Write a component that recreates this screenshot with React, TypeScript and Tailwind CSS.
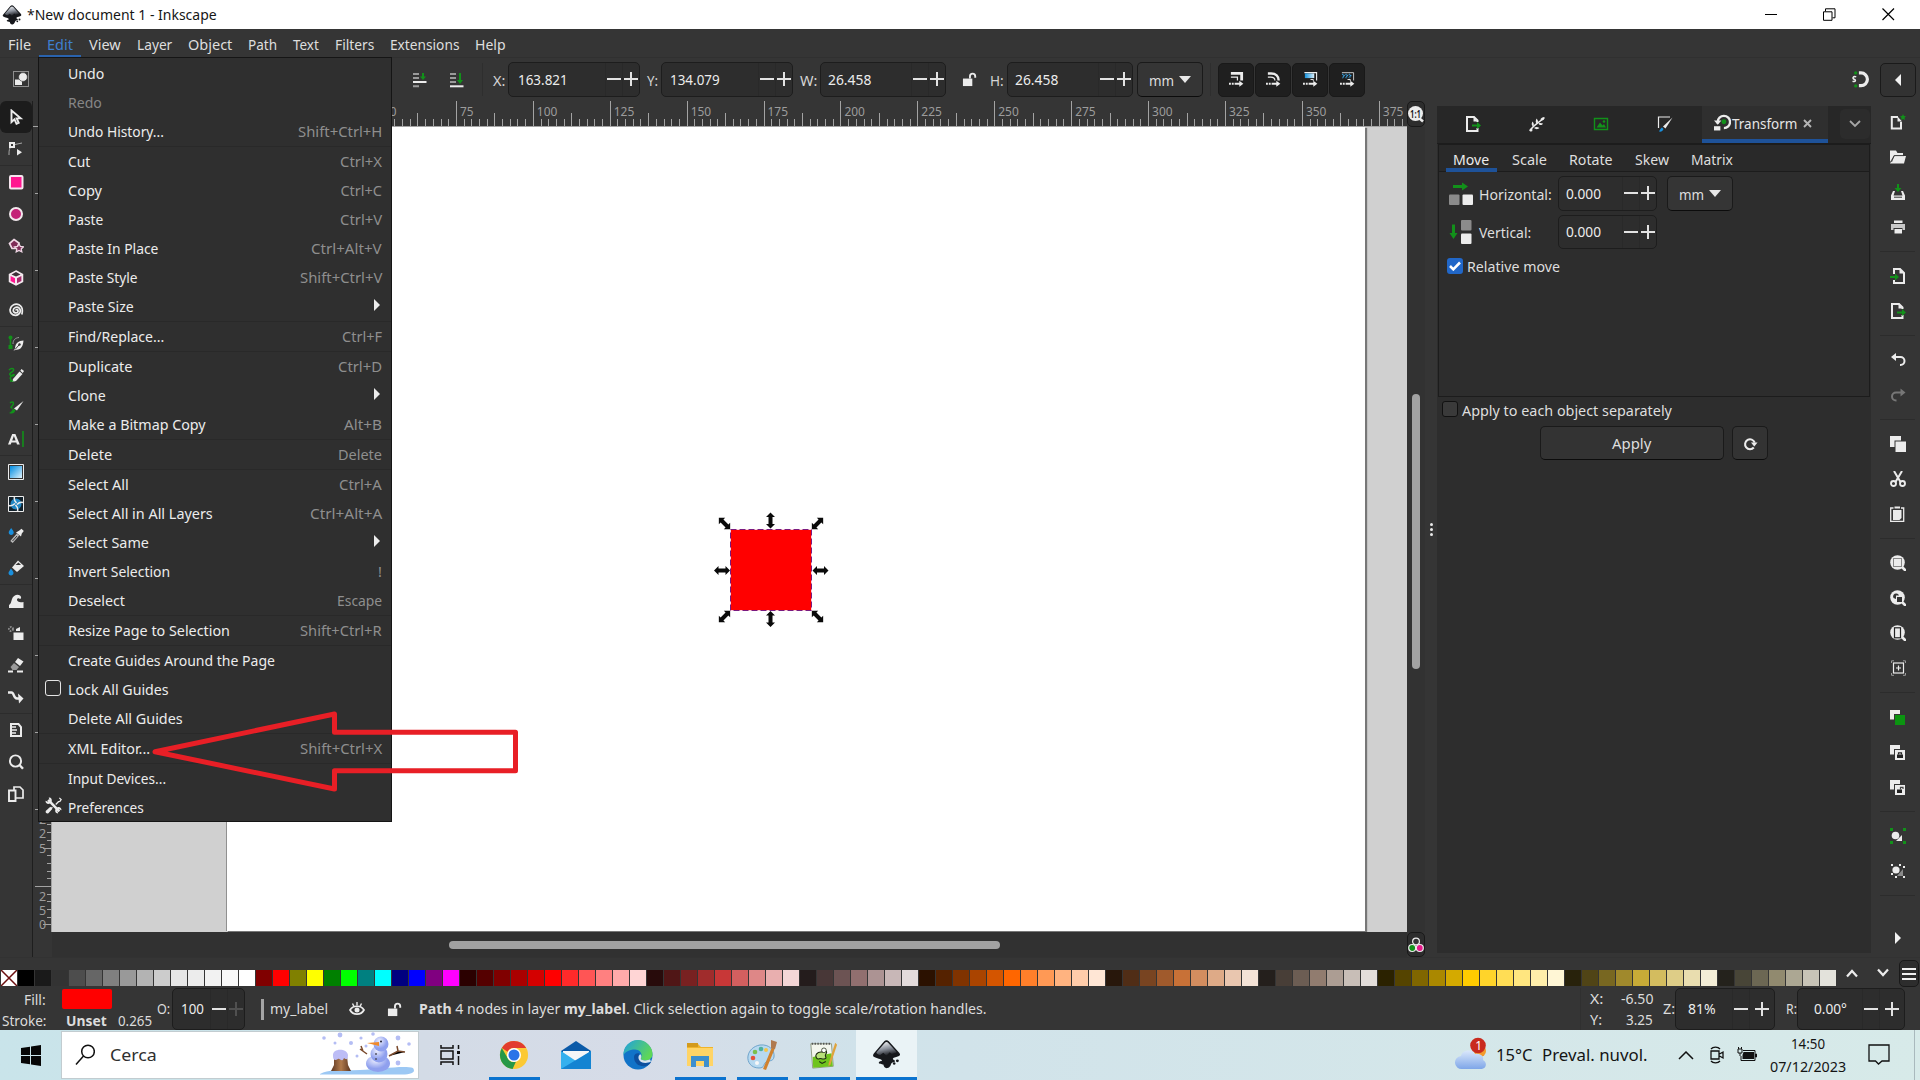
import React, { useLayoutEffect, useRef, useState } from "react";

/* Single-line label squeezed or stretched to a known width. */
function Fit({ w, children, right = false, className = "" }: { w: number; children: React.ReactNode; right?: boolean; className?: string }) {
  const ref = useRef<HTMLSpanElement>(null);
  const [scale, setScale] = useState(1);
  useLayoutEffect(() => {
    if (ref.current) setScale(w / ref.current.offsetWidth);
  }, [w]);
  return (
    <span className={"flex shrink-0 " + (right ? "justify-end " : "") + className} style={{ width: w }}>
      <span ref={ref} className={"inline-block shrink-0 whitespace-nowrap " + (right ? "origin-right" : "origin-left")} style={{ transform: `translateY(-1px) scaleX(${scale})` }}>
        {children}
      </span>
    </span>
  );
}

function Ico({ s = 16, children, className = "" }: { s?: number; children: React.ReactNode; className?: string }) {
  return (
    <svg width={s} height={s} viewBox="0 0 16 16" className={"shrink-0 " + className} fill="none">
      {children}
    </svg>
  );
}

const W = "#ececec";
const G = "#12911a";

/* ---------- menus ---------- */

const menus: [string, number][] = [
  ["File", 23], ["Edit", 26], ["View", 32], ["Layer", 35], ["Object", 44],
  ["Path", 29], ["Text", 26], ["Filters", 39], ["Extensions", 69], ["Help", 31],
];

type Item = { t: string; w: number; k?: string; kw?: number; sub?: boolean; off?: boolean; box?: boolean; tools?: boolean };
const editMenu: Item[][] = [
  [{ t: "Undo", w: 36 }, { t: "Redo", w: 34, off: true }, { t: "Undo History...", w: 96, k: "Shift+Ctrl+H", kw: 84 }],
  [
    { t: "Cut", w: 22, k: "Ctrl+X", kw: 42 }, { t: "Copy", w: 34, k: "Ctrl+C", kw: 42 }, { t: "Paste", w: 35, k: "Ctrl+V", kw: 42 },
    { t: "Paste In Place", w: 90, k: "Ctrl+Alt+V", kw: 71 }, { t: "Paste Style", w: 70, k: "Shift+Ctrl+V", kw: 82 }, { t: "Paste Size", w: 66, sub: true },
  ],
  [{ t: "Find/Replace...", w: 96, k: "Ctrl+F", kw: 40 }],
  [{ t: "Duplicate", w: 64, k: "Ctrl+D", kw: 44 }, { t: "Clone", w: 38, sub: true }, { t: "Make a Bitmap Copy", w: 138, k: "Alt+B", kw: 38 }],
  [{ t: "Delete", w: 44, k: "Delete", kw: 44 }],
  [
    { t: "Select All", w: 61, k: "Ctrl+A", kw: 43 }, { t: "Select All in All Layers", w: 145, k: "Ctrl+Alt+A", kw: 72 }, { t: "Select Same", w: 81, sub: true },
    { t: "Invert Selection", w: 102, k: "!", kw: 4 }, { t: "Deselect", w: 57, k: "Escape", kw: 45 },
  ],
  [{ t: "Resize Page to Selection", w: 162, k: "Shift+Ctrl+R", kw: 82 }],
  [{ t: "Create Guides Around the Page", w: 207 }, { t: "Lock All Guides", w: 101, box: true }, { t: "Delete All Guides", w: 115 }],
  [{ t: "XML Editor...", w: 82, k: "Shift+Ctrl+X", kw: 82 }],
  [{ t: "Input Devices...", w: 98 }, { t: "Preferences", w: 76, tools: true }],
];

function EditMenu() {
  return (
    <div className="absolute left-[38px] top-[57px] flex h-[765px] w-[354px] flex-col border border-[#151515] bg-[#2f2f2f] pt-px">
      {editMenu.map((group, gi) => (
        <div key={gi} className={gi ? "border-t border-[#292929]" : ""}>
          {group.map((it) => (
            <div key={it.t} className={"flex h-[29px] items-center pr-[9px] " + (it.off ? "text-[#868686]" : "text-[#ececec]")}>
              <div className="flex w-[29px] shrink-0 items-center pl-[6px]">
                {it.box && <span className="-mt-[3px] h-4 w-4 rounded-[3px] border border-[#e4e4e4]" />}
                {it.tools && (
                  <Ico s={17} className="-mt-[4px]">
                    <path d="M3 2.8l10.500 10.700" stroke={W} strokeWidth="2.400" />
                    <path d="M.5 3.500l2.500 1L4.500 3 3.500.6C5.500.2 7 2 6.300 4.200L4.200 6.400C2.200 7 .2 5.500.5 3.500zM15.500 12.500l-2.500-1-1.500 1.500 1 2.400c-2 .4-3.500-1.400-2.800-3.600l2.100-2.200c2-.6 4 .9 3.700 2.900z" fill={W} />
                    <path d="M13.500.8l1.700 1.700-1.200 1.600-1.300.3-2.600 2.600M7 9.500L3.500 13" stroke={W} strokeWidth="1.200" />
                    <path d="M5 9.200L7 11l-3.800 4.200c-1.600.9-3.300-.9-2.300-2.300z" fill={W} />
                  </Ico>
                )}
              </div>
              <Fit w={it.w}>{it.t}</Fit>
              <span className="grow" />
              {it.k && <Fit w={it.kw!} right className="text-[#8e8e8e]">{it.k}</Fit>}
              {it.sub && <span className="mr-[2px] h-0 w-0 -translate-y-[2px] border-y-[6px] border-l-[6px] border-y-transparent border-l-[#ececec]" />}
            </div>
          ))}
        </div>
      ))}
    </div>
  );
}

/* ---------- inputs ---------- */

function Spin({ value, vw, box, wide = false, dim = false, pad = "pl-[9px]" }: { value: string; vw: number; box: string; wide?: boolean; dim?: boolean; pad?: string }) {
  return (
    <div className={"flex shrink-0 items-center rounded-[5px] border border-[#1d1d1d] bg-[#2d2d2d] text-[#ececec] " + pad + " " + box}>
      <Fit w={vw}>{value}</Fit>
      <span className="grow" />
      <div className={"flex items-center justify-center self-stretch border-l border-[#292929] " + (wide ? "w-[17px]" : "w-[17px]")}>
        <span className="-mt-px h-[2px] w-[14px] bg-[#e2e2e2]" />
      </div>
      <div className={"flex items-center justify-center self-stretch border-l border-[#292929] " + (wide ? "w-[25px]" : "w-[17px]")}>
        <svg width="14" height="14" viewBox="0 0 14 14" className="-mt-px shrink-0">
          <path d="M0 7h14M7 0v14" stroke={dim ? "#505050" : "#e2e2e2"} strokeWidth="2" />
        </svg>
      </div>
    </div>
  );
}

function UnitButton() {
  return (
    <div className="flex h-[35px] w-[66px] shrink-0 items-center rounded-[5px] border border-[#1a1a1a] border-b-[#0c0c0c] bg-[#353535] pl-[11px] text-[#dedede]">
      <Fit w={25} className="mt-[2px]">mm</Fit>
      <span className="ml-[5px] h-0 w-0 border-x-[6px] border-t-[7px] border-x-transparent border-t-[#e8e8e8]" />
    </div>
  );
}

function LockIcon({ className = "" }: { className?: string }) {
  return (
    <Ico s={15} className={className}>
      <path d="M1 7h10v8H1z" fill={W} />
      <path d="M8.500 7V4.500a2.800 2.800 0 015.600 0V6" stroke={W} strokeWidth="2" />
    </Ico>
  );
}

const dots = <path d="M0 12.500h2M3 12.500h2M6 12.500h2M8 12.500h4" stroke={W} strokeWidth="2" />;
const arrowTip = <path d="M11 9.300l4.300 3.200L11 15.700z" fill={W} />;
const affect = [
  <g key="a"><path d="M2 1.500h11.500V9" stroke={W} strokeWidth="3" /><path d="M2 5.500h7V9" stroke={W} strokeWidth="1.300" />{dots}{arrowTip}</g>,
  <g key="b"><path d="M2 1.500h3.500c5 0 8 3 8 7.500" stroke={W} strokeWidth="2.600" /><path d="M2 5.500h3c3 0 4.500 1.500 4.500 3.500" stroke={W} strokeWidth="1.300" />{dots}{arrowTip}</g>,
  <g key="c"><defs><linearGradient id="ga"><stop stopColor="#1592dd" /><stop offset="1" stopColor="#d8eefa" /></linearGradient></defs><path d="M1.500.7h13V9" stroke={W} strokeWidth="1.200" /><path d="M2 1.500h10v5H2z" fill="url(#ga)" /><path d="M8 8h3v1.500" stroke={W} />{dots}{arrowTip}</g>,
  <g key="d"><path d="M2 .7h12.500V9" stroke="#cfcfcf" strokeWidth="1" /><path d="M2.500 2l2 2-2 2.500M6 2l2 2-2 2.500M9.500 2l2 2-2 2.500" stroke="#3aa3e2" strokeWidth="1.500" strokeDasharray="1.200 .6" /><path d="M8 8h3v1.500" stroke={W} />{dots}{arrowTip}</g>,
];

function Toolbar() {
  return (
    <div className="flex h-[44px] shrink-0 items-start border-t border-[#303030] bg-[#353535] pt-[4px] text-[#d6d6d6]">
      <div className="flex h-[35px] w-full items-center">
        <Ico className="-mt-[2px] ml-[13px]">
          <rect x=".5" y=".5" width="15" height="15" stroke="#e8e8e8" strokeDasharray="1 1" />
          <path d="M2 8.500h7v5.500H2z" fill={W} /><circle cx="10" cy="6" r="4.400" fill={W} stroke="#353535" strokeWidth=".6" />
        </Ico>
        <Ico className="ml-[383px]">
          <path d="M1 2h6M1 6h6M1 14.300h6" stroke="#9a9a9a" strokeWidth="2" /><path d="M1 10h13.500" stroke={W} strokeWidth="2" />
          <path d="M11 1v4" stroke={G} strokeWidth="2" /><path d="M8 4.500h6L11 8z" fill={G} />
        </Ico>
        <Ico className="ml-[21px]">
          <path d="M1 2h6M1 6h6M1 10h6" stroke="#9a9a9a" strokeWidth="2" /><path d="M1 14.300h13.500" stroke={W} strokeWidth="2" />
          <path d="M11 1v8" stroke={G} strokeWidth="2" /><path d="M8 8h6l-3 4z" fill={G} />
        </Ico>
        <span className="ml-[17px] h-[33px] w-px bg-[#2e2e2e]" />
        <Fit w={12} className="ml-[10px] mt-[2px]">X:</Fit>
        <Spin value="163.821" vw={50} box="ml-[3px] h-[35px] w-[132px]" />
        <Fit w={11} className="ml-[7px] mt-[2px]">Y:</Fit>
        <Spin value="134.079" vw={50} box="ml-[3px] h-[35px] w-[132px]" pad="pl-[8px]" />
        <Fit w={17} className="ml-[7px] mt-[2px]">W:</Fit>
        <Spin value="26.458" vw={43} box="ml-[3px] h-[35px] w-[126px]" pad="pl-[7px]" />
        <LockIcon className="ml-[16px]" />
        <Fit w={14} className="ml-[13px] mt-[2px]">H:</Fit>
        <Spin value="26.458" vw={43} box="ml-[3px] h-[35px] w-[126px]" pad="pl-[7px]" />
        <div className="ml-[4px]"><UnitButton /></div>
        <span className="ml-[7px] h-[33px] w-px bg-[#2e2e2e]" />
        <div className="ml-[7px] flex gap-px">
          {affect.map((a, i) => (
            <div key={i} className="flex h-[34px] w-[36px] items-center justify-center rounded-[5px] border border-[#191919] bg-[#1f1f1f]">
              <Ico s={15}>{a}</Ico>
            </div>
          ))}
        </div>
        <span className="grow" />
        <Ico s={17}>
          <path d="M6.500 1.800h2a6 6 0 010 12h-2" stroke={W} strokeWidth="3" />
          <circle cx="3.500" cy="1.800" r="1.600" fill={G} /><circle cx="3.500" cy="14" r="1.600" fill={G} />
          <path d="M4 5.500c-3-1-4 1.500-2 2.200s1.500 3-1.500 2" stroke={W} strokeWidth="1.400" />
        </Ico>
        <div className="ml-[11px] mr-[4px] flex h-[34px] w-[36px] items-center justify-center rounded-[5px] border border-[#1a1a1a] bg-[#323232]">
          <span className="h-0 w-0 border-y-[6px] border-r-[6px] border-y-transparent border-r-[#f2f2f2]" />
        </div>
      </div>
    </div>
  );
}

/* ---------- left tool box ---------- */

const P = "#e6198a";
const tools: React.ReactNode[][] = [
  [
    <path d="M3.500 1.500v11.500l3-2.700 2 4.500 2.200-1-2-4.400h4z" stroke={W} strokeWidth="1.900" />,
    <g><path d="M2 2h4v4H2z" stroke={W} strokeWidth="2" /><path d="M7 3.500L14 2M2 7c-1 2-1 4-1 7" stroke="#a8a8a8" /><path d="M9 8v6.500l5-3.200z" fill={W} /></g>,
  ],
  [
    <rect x="2" y="2" width="12.500" height="12.500" rx="1" fill="#ff1690" stroke="#f6e6ef" strokeWidth="2" />,
    <circle cx="8" cy="8" r="6" fill="#c42278" stroke="#f2e8ed" strokeWidth="2" />,
    <g><path d="M6 1.500l5 3.500-2 5.500H4L1.500 5.500z" fill="#7f2b58" stroke="#f0d8e6" strokeWidth="1.700" /><path d="M11 5.800l1.400 2.700 3 .4-2.200 2 .6 3-2.800-1.400-2.800 1.400.6-3-2.200-2 3-.4z" fill="#7f2b58" stroke="#f0d8e6" strokeWidth="1.300" /></g>,
    <g><path d="M8 1l6.500 3.500v7L8 15l-6.500-3.500v-7z" fill="#f4e9ef" stroke="#f4e9ef" strokeWidth="1.500" /><path d="M8 2l4.500 2.400L8 6.500 3.500 4.400z" fill="#3d3038" /><path d="M2.600 6L7 8.200v5L2.600 11z" fill="#ff1690" /><path d="M13.400 6L9 8.200v5l4.400-2.200z" fill="#a72a6c" /></g>,
    <path d="M8 8.500c0-1.500 2.200-1 2 .8-.3 2.200-4.400 2.200-4.700-.6C5 5.500 9 4 11.200 6.200c2.400 2.600.6 7-3.600 7.200C3.800 13.500 1.500 10 2.200 7 3 3 7.500 1 11 2.800c3 1.600 4 5.200 2.800 9.700" stroke={W} strokeWidth="1.700" />,
  ],
  [
    <g><path d="M2.500 4v8" stroke={G} strokeWidth="1.600" /><circle cx="2.500" cy="2.500" r="2" fill={G} /><path d="M.5 10h4v4h-4z" fill={G} /><path d="M5 9c0-4 2-6 6-6.500" stroke="#9a9a9a" /><path d="M15.500 5.500c-5 .5-8 2-8.500 8l-1.500 2 3-.8c5 0 6.500-4 7-9.200z" fill={W} /><path d="M7 14.500l4-4.500" stroke="#353535" /><circle cx="11.500" cy="9.500" r="1.200" fill="#353535" /></g>,
    <g><path d="M1 3c3-3 6-1 4 1S0 7 3 8.500s4-1.500 2.500-1S1 11 3 12.500" stroke={G} strokeWidth="1.500" /><path d="M5 12l6.500-7.500 3 2.500L8 14l-4 1z" fill={W} /><path d="M12.300 3.800L13.500 2l2.500 2-1.300 2z" fill={W} /><path d="M2.500 11.500l3.500 3-4 .5z" fill={G} /></g>,
    <g><path d="M2 4c4-3 4 1 2.500 2.500S2 9 4.500 9" stroke={G} strokeWidth="1.500" /><path d="M1 14c4 1.500 6-.5 6.500-3L5 9.500C4 12 3 13 1 14z" fill={G} /><path d="M6 9.500L15.500 2 9 11.500z" fill={W} /></g>,
    <g><path d="M0 13.500L4.200 3h3.200l4.400 10.500H9l-.7-2H3.500l-.8 2zM4.200 9.400h3.400L5.900 5z" fill={W} /><path d="M15 0v16" stroke={G} strokeWidth="1.600" /></g>,
  ],
  [
    <g><defs><linearGradient id="gb" x2="1" y2="1"><stop offset=".1" stopColor="#1395e4" /><stop offset="1" stopColor="#dff2fc" /></linearGradient></defs><path d="M.5.5h15v15H.5z" fill="#353535" stroke={W} /><path d="M2 2h12v12H2z" fill="url(#gb)" /></g>,
    <g><path d="M.5.5h15v15H.5z" fill="#12212b" stroke={W} /><circle cx="8" cy="8" r="5.500" fill="#2187c4" /><path d="M6.500 1c-1 3 .5 4.500 2 6M15 6.500c-3-1-4.500.5-6 2M9.500 15c1-3-.5-4.500-2-6M1 9.500c3 1 4.500-.5 6-2" stroke={W} strokeWidth="1.500" /></g>,
    <g><path d="M3.200 0c1.500 2.300 2.500 3 2.500 4.500S4.500 7 3.200 7 .7 6 .7 4.500 2 2 3.200 0z" fill="#1a8fdc" /><path d="M3.500 14l6.500-7.500" stroke="#b9b9b9" strokeWidth="3.200" /><path d="M4.500 13l4.500-5" stroke="#353535" /><path d="M8 4.500l5 4 .8-3L15.800 3 13.500.7l-2.500 2z" fill={W} /></g>,
    <g><path d="M10 .5l6 5.500-7 6-5-4.500z" fill={W} /><path d="M7.500 5l3-2.500L13 5z" fill="#353535" /><path d="M3 8.500c1.500 2.300 2.500 3 2.500 4.500S4.300 15.500 3 15.500.5 14.500.5 13 2 10.500 3 8.500z" fill="#1a8fdc" /></g>,
  ],
  [
    <path d="M1 15v-3c2-1 2-3 3-6 1-3 5-5.500 8-3.500 1.500 1 1.500 3 0 3.500-1-1.200-3-1-3 .8 0 2.200 3 3 6.500 2.200v6z" fill={W} />,
    <g><circle cx="3" cy="4" r="2" stroke="#8a8a8a" strokeDasharray="1.500 1" strokeWidth="2" /><path d="M8 4l4-2v4H8z" fill={W} /><path d="M5.500 7.500h10V15h-10z" fill={W} /></g>,
    <g><path d="M10 1l5.500 3.500L12 9 7 5z" fill={W} /><path d="M6 6l5 4-2.500 3h-4L2.500 10z" fill="#9a9a9a" /><path d="M0 14.500h5M9 14.500h6" stroke={W} strokeWidth="2" /></g>,
    <g><path d="M0 3.500h3.500C6.500 3.500 5 9.500 9 9.500h2" stroke={W} strokeWidth="2.400" /><path d="M10 4.500l5.500 5-4.500 5z" fill={W} /></g>,
  ],
  [
    <g><path d="M3 2h7.500l2.500 3v9H3z" stroke={W} strokeWidth="2" /><path d="M4 5h4M4 8h5M4 11h4" stroke={W} strokeWidth="1.300" /></g>,
    <g><circle cx="7.500" cy="7" r="5.600" stroke={W} strokeWidth="1.900" /><path d="M11.500 11l3.500 3.800" stroke={W} strokeWidth="2.400" /></g>,
    <g><path d="M6 1h6l3 3v8H6z" stroke={W} strokeWidth="1.700" /><path d="M1 4.500h6.500V15H1z" fill="#353535" stroke={W} strokeWidth="1.900" /></g>,
  ],
];

function ToolBox() {
  return (
    <div className="flex w-[33px] shrink-0 flex-col border-r border-[#1e1e1e] bg-[#353535]">
      {tools.map((g, gi) => (
        <div key={gi} className={gi ? "border-t border-[#2c2c2c]" : ""}>
          {g.map((t, i) => (
            <div key={i} className={"flex h-8 w-8 items-center justify-center " + (gi + i === 0 ? "rounded-[6px] bg-[#1c1c1c]" : "")}>
              <Ico>{t}</Ico>
            </div>
          ))}
        </div>
      ))}
    </div>
  );
}

/* ---------- canvas with rulers ---------- */

const RX = 456.400 - 33;
const STEP = 76.910;

function HRuler() {
  const ticks: React.ReactNode[] = [];
  for (let i = -20; i <= 126; i++) {
    const px = Math.floor(RX + (i * STEP) / 10) + 0.5;
    const n = ((i % 10) + 10) % 10;
    if (px > 1374) break;
    ticks.push(<path key={i} d={`M${px} ${n === 0 ? 0 : n === 5 ? 12 : 18}V25`} stroke="#a3a3a3" />);
  }
  const labels = Array.from({ length: 14 }, (_, k) => 50 + 25 * k);
  return (
    <svg width="1374" height="26" className="shrink-0 bg-[#353535]">
      {ticks}
      {labels.map((v) => (
        <text key={v} x={RX + ((v - 75) / 25) * STEP + 3.500} y="14.500" textLength={v < 100 ? 13.500 : 20.500} lengthAdjust="spacingAndGlyphs" fill="#9c9c9c" className="text-[12.500px]">{v}</text>
      ))}
      <path d="M0 25.500h1374" stroke="#a3a3a3" />
    </svg>
  );
}

function VRuler() {
  const ticks: React.ReactNode[] = [];
  for (let i = -98; i <= 5; i++) {
    const y = Math.round(886 + i * 7.698 - 127) + 0.5;
    const n = ((i % 10) + 10) % 10;
    if (y < 0) continue;
    ticks.push(<path key={i} d={`M${n === 0 ? 2 : n === 5 ? 10 : 14} ${y}H19`} stroke="#a3a3a3" />);
  }
  return (
    <svg width="19" height="805" className="shrink-0 overflow-visible bg-[#353535]">
      {ticks}
      {[["2", 697], ["2", 711], ["5", 725.500], ["2", 773.500], ["5", 788], ["0", 802]].map(([c, y], i) => (
        <text key={i} x="6" y={y} fill="#9c9c9c" className="text-[12.500px]">{c}</text>
      ))}
      <path d="M18.500 0v805" stroke="#a3a3a3" />
    </svg>
  );
}

function Selection() {
  const dbl = "M0-8L4.500-3.500H2V3.500H4.500L0 8-4.500 3.500H-2V-3.500H-4.500Z";
  const h: [number, number, number][] = [
    [80.500, 30.500, 0], [80.500, 129, 0], [32, 80.500, 90], [130.500, 80.500, 90],
    [34.500, 33.500, -45], [127.500, 33.500, 45], [34.500, 126.500, 45], [127.500, 126.500, -45],
  ];
  return (
    <svg width="162" height="162" className="absolute left-[638px] top-[363px]">
      <rect x="40" y="40" width="82" height="81" fill="#ff0000" />
      <rect x="40.500" y="39.500" width="81" height="81" fill="none" stroke="#ffd0d8" />
      <rect x="40.500" y="39.500" width="81" height="81" fill="none" stroke="#7a1a80" strokeDasharray="6 3" />
      {h.map(([x, y, r], i) => <path key={i} d={dbl} transform={`translate(${x} ${y}) rotate(${r})`} fill="#0a0a0a" />)}
    </svg>
  );
}

function Canvas() {
  return (
    <div className="flex w-[1392px] shrink-0 flex-col bg-[#353535]">
      <div className="flex">
        <HRuler />
        <div className="flex h-[26px] w-[18px] items-center justify-center rounded-[5px] border border-[#191919] bg-[#2d2d2d]">
          <svg width="16" height="18" viewBox="0 0 16 18" className="shrink-0">
            <circle cx="7.500" cy="8.500" r="7.500" fill={W} /><path d="M11 13l4 3.500" stroke={W} strokeWidth="2.500" />
            <text x="2" y="12.500" textLength="11" lengthAdjust="spacingAndGlyphs" fill="#111" className="text-[10px] font-semibold">1:1</text>
          </svg>
        </div>
      </div>
      <div className="flex h-[805px]">
        <VRuler />
        <div className="relative flex w-[1355px] shrink-0 overflow-hidden bg-[#d0d0d0] pl-[174px]">
          <div className="h-[804px] w-[1139px] border-l border-[#909090] bg-white shadow-[2px_1px_1px_#777]" />
          <Selection />
        </div>
        <div className="flex w-[18px] justify-center bg-[#323232] pt-[267px]">
          <span className="h-[275px] w-[8px] rounded-full bg-[#a2a2a2]" />
        </div>
      </div>
      <div className="flex h-[26px] pl-[19px]">
        <div className="flex w-[1355px] items-center bg-[#313131] pl-[397px]">
          <span className="h-[8px] w-[551px] rounded-full bg-[#a2a2a2]" />
        </div>
        <div className="flex w-[18px] items-center justify-center rounded-[5px] border border-[#191919] bg-[#2d2d2d]">
          <svg width="16" height="16" viewBox="0 0 16 16" className="shrink-0">
            <circle cx="8" cy="4.500" r="3.400" fill="#353535" stroke={W} strokeWidth="1.200" />
            <circle cx="4.200" cy="11" r="3.500" fill={G} stroke={W} strokeWidth="1.200" />
            <circle cx="11.800" cy="11" r="3.500" fill={P} stroke={W} strokeWidth="1.200" />
          </svg>
        </div>
      </div>
    </div>
  );
}

/* ---------- transform dock ---------- */

const exportIcon = <g><path d="M9.500 15H2V1h7l3.500 3.500V6M12.500 12v3H9" stroke={W} strokeWidth="2" /><path d="M8.500 1v4.500h4" fill={W} /><path d="M7 9.500h6" stroke={G} strokeWidth="2" /><path d="M12 6l4 3.500-4 3.500z" fill={G} /></g>;

function DockTabs() {
  const icons = [
    exportIcon,
    <g key="b"><path d="M1 15C3 10 8 8 15 2" stroke={W} strokeWidth="1.500" /><path d="M3.500 10C2 8 3 7 3.500 5.500 5 7 5 8.500 4.500 10zM7.500 7.500C6 6 7 4 7.500 2.500 9 4 9.500 5.500 8.500 7.500zM5 12c2-1.500 3.500-1 5.500 0C9 13.500 6.500 13.500 5 12zM9.500 7.500c2-1 3 0 4.500 0-1 2-3.500 2-4.500 0zM12 4.500C11 3 12 1.500 15.500 1c.5 2-1.500 4-3.500 3.500z" fill={W} /><circle cx="2" cy="14" r="1.500" fill={W} /></g>,
    <g key="c"><path d="M1.500 2.500h13v11h-13z" stroke={G} strokeWidth="1.400" /><path d="M3.500 11.500L7 6.500l2.500 3 1.500-1.500 2 3.500z" fill={G} /><circle cx="11" cy="5.500" r="1.300" fill={G} /></g>,
    <g key="d"><path d="M1.500 12V1h11.500" stroke={W} strokeWidth="1.200" /><path d="M2 15.500c2 .5 4-.5 4.500-2.500L5 11.500C3.500 12 3 14 2 15.500z" fill="#1a8fdc" /><path d="M6 10.500L15.500 1.500 8.500 12.500z" fill={W} /></g>,
  ];
  return (
    <div className="flex h-[38px] shrink-0 border-b border-[#1c1c1c] bg-[#272727]">
      {icons.map((ic, i) => (
        <div key={i} className="flex w-[64px] items-center justify-center pb-px pl-[8px]">
          <Ico>{ic}</Ico>
        </div>
      ))}
      <div className="ml-[9px] flex w-[126px] items-center border-b-[4px] border-[#1e5299] bg-[#2f2f2f] pl-[12px] pt-[3px]">
        <Ico s={17} className="-mt-[4px]">
          <path d="M3.500 9V7.500a5.800 5.800 0 115.800 5.800" stroke={W} strokeWidth="2.200" /><path d="M0 6h7L3.500 10z" fill={W} /><path d="M0 11.500h6v4H0z" fill={W} /><circle cx="9.300" cy="7.300" r="2.300" fill={G} />
        </Ico>
        <Fit w={65} className="ml-[1px] text-[#e6e6e6]">Transform</Fit>
        <svg width="9" height="9" viewBox="0 0 9 9" className="-mt-px ml-[6px] shrink-0"><path d="M1 1l7 7M8 1L1 8" stroke="#b5b5b5" strokeWidth="1.900" /></svg>
      </div>
      <div className="ml-[12px] mt-[3px] flex h-[30px] w-[30px] items-center justify-center rounded-[5px] bg-[#2c2c2c]">
        <svg width="12" height="8" viewBox="0 0 12 8" className="-mt-px"><path d="M1 1l5 5 5-5" stroke="#a6a6a6" strokeWidth="1.800" fill="none" /></svg>
      </div>
    </div>
  );
}

function Dock() {
  return (
    <div className="mt-[5px] flex h-[847px] w-[434px] shrink-0 flex-col bg-[#2d2d2d] text-[#dedede]">
      <DockTabs />
      <div className="mx-px flex h-[253px] flex-col border border-[#1c1c1c]">
        <div className="flex h-[27px] shrink-0 items-stretch border-b border-[#1c1c1c] bg-[#292929] pl-[7px]">
          <div className="relative z-10 -mb-px flex w-[51px] items-center border-b-[4px] border-[#1e5299] pl-[7px] pt-[6px] text-[#ececec]"><Fit w={36}>Move</Fit></div>
          <div className="flex items-center gap-[22px] pl-[15px] pt-[3px]">
            <Fit w={35}>Scale</Fit><Fit w={44}>Rotate</Fit><Fit w={34}>Skew</Fit><Fit w={42}>Matrix</Fit>
          </div>
        </div>
        <div className="mt-[4px] flex h-[35px] items-center pl-[10px]">
          <svg width="24" height="24" viewBox="0 0 24 24" className="shrink-0">
            <path d="M4 4.500h10" stroke={G} strokeWidth="3" /><path d="M13 .5l6 4-6 4z" fill={G} />
            <rect y="12.500" width="10.500" height="10.500" rx="1" fill="#8b8b8b" /><rect x="13.500" y="12.500" width="10.500" height="10.500" rx="1" fill={W} />
          </svg>
          <Fit w={73} className="ml-[6px] mt-[2px]">Horizontal:</Fit>
          <Spin value="0.000" vw={35} box="ml-[6px] h-[35px] w-[99px]" pad="pl-[7px]" />
          <div className="ml-[10px]"><UnitButton /></div>
        </div>
        <div className="mt-[4px] flex h-[34px] items-center pl-[10px]">
          <svg width="24" height="24" viewBox="0 0 24 24" className="shrink-0">
            <path d="M4.500 4.500v10" stroke={G} strokeWidth="3" /><path d="M.5 13l4 6 4-6z" fill={G} />
            <rect x="12" width="10.500" height="10.500" rx="1" fill="#8b8b8b" /><rect x="12" y="13.500" width="10.500" height="10.500" rx="1" fill={W} />
          </svg>
          <Fit w={52} className="ml-[6px] mt-px">Vertical:</Fit>
          <Spin value="0.000" vw={35} box="ml-[27px] h-[34px] w-[99px]" pad="pl-[7px]" />
        </div>
        <div className="mt-[8px] flex items-center pl-[8px]">
          <span className="-mt-[2px] flex h-4 w-4 items-center justify-center rounded-[3px] bg-[#2167c8]">
            <svg width="12" height="10" viewBox="0 0 12 10"><path d="M1 5l3.300 3.300L11 1.500" stroke="#fff" strokeWidth="2.600" fill="none" /></svg>
          </span>
          <Fit w={93} className="ml-[4px]">Relative move</Fit>
        </div>
      </div>
      <div className="mt-[4px] flex items-center pl-[5px]">
        <span className="-mt-[4px] h-4 w-4 rounded-[3px] border border-[#111] bg-[#3a3a3a]" />
        <Fit w={210} className="ml-[4px]">Apply to each object separately</Fit>
      </div>
      <div className="mt-[5px] flex gap-[8px] pl-[103px]">
        <div className="flex h-[34px] w-[184px] items-center justify-center rounded-[5px] border border-[#1a1a1a] border-b-[#0c0c0c] bg-[#333] pr-[2px]"><Fit w={39} className="mt-[2px]">Apply</Fit></div>
        <div className="flex h-[34px] w-[36px] items-center justify-center rounded-[5px] border border-[#1a1a1a] border-b-[#0c0c0c] bg-[#333]">
          <Ico s={15}><path d="M11.500 12.300A5.300 5.300 0 1112.500 7" stroke={W} strokeWidth="2.200" /><path d="M8.500 7h7l-3.500 4.200z" fill={W} /></Ico>
        </div>
      </div>
    </div>
  );
}

/* ---------- command bar ---------- */

const mag = <g><circle cx="7.500" cy="7.500" r="7.300" fill={W} /><path d="M12.500 12.500l2.500 2.500" stroke={W} strokeWidth="2.600" strokeLinecap="round" /></g>;
const two = (c: string) => <g><path d="M0 1h10v4H4v5.500H0z" fill={W} /><path d="M5 6h10v10H5z" fill={c} /></g>;
const commands: React.ReactNode[][] = [
  [
    <g><path d="M8 3H1.800v11.500H11V8" stroke={W} strokeWidth="2" /><path d="M7.500 3v4.500H12L8 3z" fill={W} /><path d="M13 0l.9 2 2.100.3-1.500 1.500.4 2.200-1.900-1-1.900 1 .4-2.200L10 2.300l2.100-.3z" fill={G} /></g>,
    <g><path d="M0 13V1.500h6l1.500 2.500H13v2.500H4z" fill={W} /><path d="M4.500 7H16l-2 7.500H0z" fill={W} /><path d="M1.500 13L4.200 6.600H14" stroke="#353535" strokeWidth=".9" /></g>,
    <g><path d="M8 0v5" stroke={G} strokeWidth="2" /><path d="M4.500 4h7L8 8z" fill={G} /><path d="M3 7l-2 4.500V16h14v-4.500L13 7h-2l1.500 4.500h-9L5 7z" fill={W} /><path d="M4 13.200h8" stroke="#353535" /></g>,
    <g><path d="M4 1.500h8.500V4H4z" fill={W} /><path d="M1 5h14v6h-2.500V9h-9v2H1z" fill="#c9c9c9" /><path d="M4.500 10h7.500v4.500H4.500z" fill={W} /></g>,
  ],
  [
    <g><path d="M4 6V1h6l4 4v10H4v-3" stroke={W} strokeWidth="2" /><path d="M9.500 1v4.500H14" fill={W} /><path d="M0 9h6" stroke={G} strokeWidth="2" /><path d="M5 5.500l4 3.500-4 3.500z" fill={G} /></g>,
    exportIcon,
  ],
  [
    <g><path d="M4 5h6.500a3.500 3.500 0 010 8H10" stroke={W} strokeWidth="2" /><path d="M6 1v8L1 5z" fill={W} /></g>,
    <g><path d="M12 5.500H6a3.500 3.500 0 000 8h.5" stroke="#777" strokeWidth="2" /><path d="M10.500 1.500v8l5-4z" fill="#777" /></g>,
  ],
  [
    <g><path d="M0 0h11v4.500H4.500V11H0z" fill={W} /><path d="M5.500 5.500H16V16H5.500z" fill={W} /></g>,
    <g><path d="M4 0l6.500 11M12 0L5.500 11" stroke={W} strokeWidth="2" /><circle cx="3.500" cy="12.500" r="2.500" stroke={W} strokeWidth="1.900" /><circle cx="12.500" cy="12.500" r="2.500" stroke={W} strokeWidth="1.900" /></g>,
    <g><path d="M3.500 2H.7v13.300h13V2h-2.700" stroke={W} strokeWidth="1.300" /><path d="M4.500.500h5.500v2H4.500zM3 4h8.500v8l-2 2H3z" fill={W} /></g>,
  ],
  [
    <g>{mag}<rect x="3.500" y="3.500" width="8" height="8" stroke="#222" strokeDasharray="1 1" /></g>,
    <g>{mag}<path d="M3.500 8a3 3 0 013-4.500 3 3 0 012.500 2H6V9z" fill="#333" /><path d="M7 7h5v5H7z" fill="#333" /></g>,
    <g>{mag}<rect x="4.500" y="2.800" width="6" height="10" stroke="#222" strokeWidth="1.200" /></g>,
    <g><path d="M1.500 3V.800H4M13 .8h2.500V3M1.500 13v2.300H4M13 15.300h2.500V13" stroke="#999" /><rect x="3.500" y="3" width="10" height="10" stroke={W} strokeWidth="1.200" /><path d="M6 8h5M8.500 5.500v5" stroke={W} strokeWidth="1.200" /></g>,
  ],
  [
    two("#0b9410"),
    <g>{two(W)}<path d="M7 10.500h6V14H7z" fill="#222" /><path d="M8.500 10.500V8.800h3v1.700" stroke="#222" strokeWidth="1.200" /></g>,
    <g>{two(W)}<path d="M7 10.500h5V14H7z" fill="#222" /><path d="M10.500 10.500V8.300H13V10" stroke="#444" strokeWidth="1.200" /></g>,
  ],
  [
    <g><path d="M0 0h3v3H0zM13 0h3v3h-3zM0 13h3v3H0zM13 13h3v3h-3z" fill={G} /><path d="M12 7v6H6z" fill={W} /><circle cx="5.500" cy="7.500" r="3.800" fill={W} /></g>,
    <g><path d="M13 6v7H7z" fill="#8b8b8b" /><circle cx="6" cy="7" r="3.600" fill={W} /><path d="M1 1h2v2H1zM9 1h2v2H9zM13 3h2v2h-2zM1 10h2v2H1zM5 13h2v2H5zM13 13h2v2h-2z" fill={W} /></g>,
  ],
];

function CommandBar() {
  return (
    <div className="flex grow flex-col pl-[9px] pt-[3px]">
      {commands.map((g, gi) => (
        <div key={gi} className="flex w-[35px] flex-col">
          {g.map((c, i) => (
            <div key={i} className="flex h-[35px] items-center justify-center pl-px"><Ico>{c}</Ico></div>
          ))}
          <span className="my-[6.500px] h-px bg-[#2c2c2c]" />
        </div>
      ))}
      <span className="ml-[15px] mt-[30px] h-0 w-0 border-y-[6px] border-l-[6px] border-y-transparent border-l-[#f2f2f2]" />
    </div>
  );
}

/* ---------- palette and status ---------- */

const palette = (
  "none 000000 1a1a1a 333333 4d4d4d 666666 808080 999999 b3b3b3 cccccc e6e6e6 ececec f2f2f2 f9f9f9 ffffff " +
  "800000 ff0000 808000 ffff00 008000 00ff00 008080 00ffff 000080 0000ff 800080 ff00ff " +
  "2b0000 550000 800000 aa0000 d40000 ff0000 ff2a2a ff5555 ff8080 ffaaaa ffd5d5 " +
  "280b0b 501616 782121 a02c2c c83737 d35f5f de8787 e9afaf f4d7d7 241c1c 483737 6c5353 916f6f ac9393 c8b7b7 e3dbdb " +
  "2b1100 552200 803300 aa4400 d45500 ff6600 ff7f2a ff9955 ffb380 ffccaa ffe6d5 " +
  "28170b 502d16 784421 a05a2c c87137 d38d5f deaa87 e9c6af f4e3d7 241f1c 483e37 6c5d53 917c6f ac9d93 c8beb7 e3dedb " +
  "2b2200 554400 806600 aa8800 d4aa00 ffcc00 ffd42a ffdd55 ffe680 ffeeaa fff6d5 " +
  "28220b 504416 786721 a0892c c8ab37 d3bc5f decd87 e9ddaf f4eed7 24221c 484537 6c6753 918a6f aca793 c8c4b7 e3e2db"
).split(" ");

function Palette() {
  return (
    <div className="flex h-[30px] shrink-0 items-start bg-[#353535]">
      <div className="mt-[12px] flex h-4 w-[1836px] shrink-0 gap-px pl-px">
        {palette.map((c, i) =>
          c === "none" ? (
            <svg key={i} width="16" height="16" className="shrink-0 bg-white"><path d="M0 0l16 16M16 0L0 16" stroke="#6d1010" strokeWidth="1.500" /></svg>
          ) : (
            <span key={i} className="h-4 w-4 shrink-0" style={{ backgroundColor: "#" + c }} />
          ),
        )}
      </div>
      <svg width="12" height="9" viewBox="0 0 12 9" className="ml-[10px] mt-[11px]"><path d="M1 7.500L6 2l5 5.500" stroke={W} strokeWidth="2.200" fill="none" /></svg>
      <svg width="12" height="9" viewBox="0 0 12 9" className="ml-[19px] mt-[10px]"><path d="M1 1.500L6 7l5-5.500" stroke={W} strokeWidth="2.200" fill="none" /></svg>
      <div className="ml-[10px] mt-[2px] flex h-[27px] w-[20px] flex-col items-center justify-center gap-[3px] rounded-[5px] border border-[#191919] bg-[#2d2d2d]">
        <span className="h-[2px] w-[14px] bg-[#f0f0f0]" /><span className="h-[2px] w-[14px] bg-[#f0f0f0]" /><span className="h-[2px] w-[14px] bg-[#f0f0f0]" />
      </div>
    </div>
  );
}

function StatusBar() {
  return (
    <div className="flex h-[42px] shrink-0 items-center bg-[#353535] text-[#dcdcdc]">
      <div className="flex h-[42px] w-[154px] shrink-0 flex-col">
        <div className="flex h-[21px] items-center">
          <Fit w={22} className="ml-[24px] mt-[2px]">Fill:</Fit>
          <span className="ml-[16px] h-[20px] w-[50px] rounded-[2px] bg-[#ff0000]" />
        </div>
        <div className="flex h-[21px] items-center pt-[3px]">
          <Fit w={44} className="ml-[2px]">Stroke:</Fit>
          <Fit w={41} className="ml-[20px] font-bold">Unset</Fit>
          <Fit w={34} className="ml-[11px]">0.265</Fit>
        </div>
      </div>
      <Fit w={13} className="ml-[3px]">O:</Fit>
      <Spin value="100" vw={23} box="ml-[2px] h-[42px] w-[73px]" pad="pl-[8px]" dim />
      <span className="ml-[16px] h-[21px] w-[3px] bg-[#a3a3a3]" />
      <Fit w={58} className="ml-[6px]">my_label</Fit>
      <svg width="16" height="16" viewBox="0 0 16 16" className="ml-[21px] shrink-0">
        <path d="M1 9c3-5 11-5 14 0-3 5.500-11 5.500-14 0z" fill="none" stroke={W} strokeWidth="1.700" /><circle cx="8" cy="9" r="2.500" fill={W} />
        <path d="M8 1v3.500M3.500 2.500l1.500 3M12.500 2.500l-1.500 3" stroke={W} strokeWidth="1.400" />
      </svg>
      <LockIcon className="ml-[22px]" />
      <Fit w={568} className="ml-[17px]">
        <b>Path</b> 4 nodes in layer <b>my_label</b>. Click selection again to toggle scale/rotation handles.
      </Fit>
      <span className="grow" />
      <div className="flex w-[74px] shrink-0 flex-col border-l border-[#303030] pl-[9px]">
        <div className="flex h-[20px] items-center pt-px"><Fit w={13}>X:</Fit><Fit w={32} right className="ml-[18px]">-6.50</Fit></div>
        <div className="flex h-[22px] items-center pt-[2px]"><Fit w={12}>Y:</Fit><Fit w={27} right className="ml-[24px]">3.25</Fit></div>
      </div>
      <Fit w={12} className="ml-[9px]">Z:</Fit>
      <Spin value="81%" vw={28} box="h-[42px] w-[100px]" wide pad="pl-[12px]" />
      <Fit w={11} className="ml-[11px]">R:</Fit>
      <Spin value="0.00°" vw={33} box="mr-[15px] h-[42px] w-[108px]" wide pad="pl-[16px]" />
    </div>
  );
}

/* ---------- taskbar ---------- */

function InkscapeLogo({ s, className = "" }: { s: number; className?: string }) {
  return (
    <svg width={s} height={s} viewBox="0 0 32 32" className={"shrink-0 " + className}>
      <defs><linearGradient id={"ink" + s} x1=".3" y1="0" x2=".6" y2="1"><stop stopColor="#f2f4f7" /><stop offset=".5" stopColor="#8a909b" /><stop offset=".95" stopColor="#1b1d22" /></linearGradient></defs>
      <path d="M13.500 1.500c1.500-1.700 3.500-1.700 5 0L30 14c1.600 1.800 1 3.300-1 4-3 1.200-6 1.600-6 2.700 0 1.300 2.500 1.300 2.500 2.600s-3 1.400-4 2.400c-1 1.200-1 4.800-4.500 5.300-3 .4-4-2-4.500-4-1.500-.5-5-.6-5-2s3.500-1.500 3.500-2.300c0-1.700-6.500-2.500-9-4.200-1.200-.8-1-2.300 0-3.500z" fill="#16181c" />
      <path d="M14 3.200c1.200-1.300 2.800-1.300 4 0L27 13c1 1-3 2-5 2.500l-2.500-2-3.500 4-3.500-3.500-3.500 2.500C6 16 4.500 14.500 5 13.500z" fill={`url(#ink${s})`} />
      <circle cx="28" cy="23" r="1.600" fill="#16181c" /><circle cx="24.500" cy="26" r="1.400" fill="#16181c" />
    </svg>
  );
}

const flakes: [number, number, number][] = [[4, 6, 1.8], [20, 3, 2.4], [41, 6, 1.6], [53, 2, 1.8], [78, 6, 2.4], [15, 11, 1.5], [31, 11, 2], [89, 12, 1.8], [37, 24, 1.5], [78, 31, 2.400], [46, 14, 1.500]];

function Snowman() {
  return (
    <svg width="96" height="46" viewBox="0 0 96 46" className="mr-[2px] shrink-0">
      <defs>
        <radialGradient id="sn" cx=".4" cy=".3"><stop stopColor="#eef0ff" /><stop offset="1" stopColor="#8fa0ee" /></radialGradient>
        <linearGradient id="tr"><stop stopColor="#5b3521" /><stop offset=".5" stopColor="#b07a4c" /><stop offset="1" stopColor="#5b3521" /></linearGradient>
      </defs>
      {flakes.map(([x, y, r], i) => <circle key={i} cx={x} cy={y} r={r} fill="#b4bdf4" />)}
      <path d="M0 42c8-5 20-3 40-4s45-5 53-2c3 4-1 6-8 6.500H0z" fill="#9cc8f4" />
      <path d="M14 24h13l1 9 3 6H11l3-6z" fill="url(#tr)" />
      <path d="M13 24c-1-8 14-8 15-1 0 6-3 4-4 3-2 5-4 0-6 1-3 2-5 1-5-3z" fill="#bdbdf6" />
      <path d="M47 22l-7-5M43 19l-2-5M69 24l9-5 7 1M78 19l-1-5" stroke="#7a4a2c" strokeWidth="1.500" />
      <ellipse cx="58" cy="31.500" rx="12" ry="8.500" fill="url(#sn)" /><circle cx="59" cy="22" r="8.500" fill="url(#sn)" /><circle cx="61" cy="12" r="7.500" fill="url(#sn)" />
      <path d="M47 11l12-1v4z" fill="#f08a2b" /><circle cx="61" cy="9.500" r="1" fill="#223" /><circle cx="56" cy="22" r="1" fill="#556" /><circle cx="56" cy="27" r="1" fill="#556" />
    </svg>
  );
}

const apps: { icon: React.ReactNode; run?: boolean }[] = [
  { run: true, icon: (
    <svg width="30" height="30" viewBox="0 0 32 32">
      <circle cx="16" cy="16" r="15" fill="#fcc934" />
      <path d="M16 1a15 15 0 0113 7.500H16a7.500 7.500 0 00-6.700 4.100L3 8.500A15 15 0 0116 1z" fill="#e23c2e" />
      <path d="M3 8.500l6.500 11.200A7.500 7.500 0 0018 23.200L14.500 31A15 15 0 013 8.500z" fill="#279847" />
      <circle cx="16" cy="16" r="7.500" fill="#fff" /><circle cx="16" cy="16" r="5.900" fill="#2a74e8" />
    </svg>) },
  { icon: (
    <svg width="30" height="30" viewBox="0 0 30 30">
      <path d="M0 11L15 1l15 10v4H0z" fill="#0b5aa8" /><path d="M2 11h26v9H2z" fill="#f4f6f8" /><path d="M0 11l15 10L30 11v18H0z" fill="#35b0ee" /><path d="M0 29L30 11v18z" fill="#1484d2" />
    </svg>) },
  { icon: (
    <svg width="30" height="30" viewBox="0 0 30 30">
      <defs><linearGradient id="ed" x2="1" y2=".5"><stop stopColor="#1f9fe2" /><stop offset="1" stopColor="#5ed757" /></linearGradient></defs>
      <circle cx="15" cy="15" r="14.500" fill="#1173c8" />
      <path d="M.5 15A14.500 14.500 0 0129.500 14c0 4-3 6.500-7 6.500-3 0-5-1-4.500-2.500C20 14 17 9.500 12 9.500 6 9.500 2 12 .5 15z" fill="url(#ed)" />
      <path d="M11 17c0 7 6 10 11.500 9 3-.5 5.500-3 5.500-4.500-7 3.500-13 0-12.500-5.500.3-1 .6-2 1-2.500-3-1-5.500 1-5.500 3.500z" fill="#0c4f9e" />
      <path d="M18 18c-.8 1.500 1.500 2.500 4.500 2.500 1.500 0 3.500-.5 4.500-1.200l1 2.200c-7 3.500-13 0-12.500-4.500.3-2 1.500-2.500 2.200-2.500.8 1 .8 2.500.3 3.500z" fill="#d6e2ec" />
    </svg>) },
  { run: true, icon: (
    <svg width="30" height="30" viewBox="0 0 30 30">
      <path d="M2 4h11l3 3h12v19H2z" fill="#f0b429" /><path d="M2 3h11v4H2z" fill="#d39a1c" /><path d="M2 8h26v18H2z" fill="#ffd466" /><path d="M6 16h18v11h-5v-6h-8v6H6z" fill="#3d8fce" />
    </svg>) },
  { run: true, icon: (
    <svg width="32" height="32" viewBox="0 0 32 32">
      <path d="M14 6c9-1 15 5 14 12-1 5-5 3-8 5s-1 6-7 6C5 29 1 23 2 17S8 7 14 6z" fill="#b7d9f0" stroke="#6fa4cb" />
      <circle cx="9" cy="13" r="2.300" fill="#7bc04c" /><circle cx="15" cy="10" r="2.300" fill="#4fb0a0" /><circle cx="7" cy="19" r="2.300" fill="#e4523c" /><circle cx="11" cy="24" r="2" fill="#f7f7f7" /><circle cx="20" cy="11" r="2" fill="#f3c64b" />
      <path d="M26 8l3 1-9 22-3-1z" fill="#d0822f" /><path d="M25 1l6 2-2 7-4-1z" fill="#b07a50" />
    </svg>) },
  { run: true, icon: (
    <svg width="30" height="30" viewBox="0 0 32 32" className="mr-[2px]">
      <path d="M3 4h22l2 24-22 2z" fill="#f3f6ee" stroke="#8e9a80" /><path d="M5 18l20-4 1.500 14-21 1.500z" fill="#6fc41d" />
      <path d="M4 4h20" stroke="#555" strokeWidth="2" strokeDasharray="1.500 1.500" />
      <path d="M9 15c3-4 6-1 8-3s4 1 2 3 2 4-1 5-4-1-6 0-5-2-3-5z" fill="#b8e07a" stroke="#1d2b12" strokeWidth="1.200" />
      <circle cx="17" cy="11" r="2.500" fill="#fff" stroke="#1d2b12" strokeWidth=".8" /><path d="M12 23l3 2 4-2" stroke="#1d2b12" strokeWidth="1.200" fill="none" />
      <path d="M29 3l2 2-7 21-2 2v-3z" fill="#e0a33c" />
    </svg>) },
];

function Taskbar() {
  return (
    <div className="flex h-[50px] shrink-0 items-stretch bg-linear-to-r from-[#c9e4ea] via-[#d1e3ea] to-[#d7eae9] text-[#141414]">
      <div className="flex w-[61px] shrink-0 items-center justify-center">
        <svg width="20" height="21" viewBox="0 0 20 21"><path d="M0 3l9-1.300V10H0zM10 1.500L20 0v10H10zM0 11h9v8.300L0 18zM10 11h10v10l-10-1.500z" fill="#060606" /></svg>
      </div>
      <div className="mb-px mt-px flex w-[358px] shrink-0 items-center border border-[#c2ccd0] bg-white">
        <svg width="20" height="22" viewBox="0 0 20 22" className="ml-[13px]"><circle cx="13" cy="7.500" r="6.300" fill="none" stroke="#111" strokeWidth="1.500" /><path d="M8.500 12L1 20.500" stroke="#111" strokeWidth="1.500" /></svg>
        <Fit w={47} className="ml-[15px] mt-[2px] text-[17px] text-[#2f2f2f]">Cerca</Fit>
        <span className="grow" />
        <Snowman />
      </div>
      <div className="flex w-[437px] shrink-0 bg-linear-to-r from-[#d3dbe6] via-[#d6dce8] to-[#d0e2ea]">
        <div className="flex w-[64px] items-center justify-center">
          <svg width="22" height="20" viewBox="0 0 22 20"><path d="M1 0v3h12V0M1 20v-3h12v3M1 6h12v8H1zM18.500 0v4M18.500 11v9" fill="none" stroke="#111" strokeWidth="1.500" /><path d="M17 6h3v3h-3z" fill="#111" /></svg>
        </div>
        {apps.map((a, i) => (
          <div key={i} className="flex w-[62px] flex-col items-center">
            <div className="flex h-[47px] items-center pt-[3px]">{a.icon}</div>
            {a.run && <span className="h-[3px] w-[51px] bg-[#0b73cf]" />}
          </div>
        ))}
      </div>
      <div className="flex w-[61px] flex-col items-center border-b-[3px] border-[#0b73cf] bg-[#eaf3f6] pt-[10px]"><InkscapeLogo s={29} /></div>
      <span className="grow" />
      <div className="flex shrink-0 items-center">
        <svg width="33" height="38" viewBox="0 0 33 38" className="mr-[8px] shrink-0">
          <defs><linearGradient id="cl" x2="0" y2="1"><stop stopColor="#dbe8fb" /><stop offset="1" stopColor="#7ea6e8" /></linearGradient></defs>
          <circle cx="25" cy="15" r="6" fill="#f39a2c" /><path d="M7 33a6.500 6.500 0 01-1-13c1-6 10-8 14-2 6-1 9 3 8 6 5 3 3 9-2 9z" fill="url(#cl)" />
          <circle cx="23" cy="9.500" r="7.800" fill="#c92a1e" /><text x="20.300" y="14" fill="#fff" className="text-[12px]">1</text>
        </svg>
        <Fit w={36} className="mt-[2px] text-[17px]">15°C</Fit>
        <Fit w={106} className="ml-[10px] mt-[2px] text-[17px]">Preval. nuvol.</Fit>
        <svg width="16" height="9" viewBox="0 0 16 9" className="ml-[30px]"><path d="M1 8l7-7 7 7" fill="none" stroke="#111" strokeWidth="1.500" /></svg>
        <svg width="16" height="18" viewBox="0 0 16 18" className="ml-[15px]"><path d="M2 3C4 .5 9 .5 11 3M2 15c2 2.500 7 2.500 9 0M2 5h8v8H2zM10.500 8L14 6v6l-3.500-2" fill="none" stroke="#111" strokeWidth="1.300" /></svg>
        <svg width="20" height="16" viewBox="0 0 20 16" className="ml-[12px]"><path d="M6 3.500h12v10H4V9" fill="none" stroke="#111" /><path d="M6.500 5H17v7H5.500V8z" fill="#111" /><path d="M18.500 7h1v3h-1zM1 2h4v4H1zM1.500 0v2M4.500 0v2M3 6v3" fill="none" stroke="#111" /></svg>
      </div>
      <div className="ml-[13px] flex w-[76px] shrink-0 flex-col items-center justify-center gap-[1px]">
        <Fit w={34} className="h-[22px] items-center text-[14.500px]">14:50</Fit>
        <Fit w={76} className="h-[22px] items-center text-[14.500px]">07/12/2023</Fit>
      </div>
      <svg width="22" height="21" viewBox="0 0 22 21" className="ml-[22px] mr-[24px] mt-[14px] shrink-0"><path d="M1 1h20v16h-7l-3.500 3L7.500 17H1z" fill="none" stroke="#111" strokeWidth="1.300" /></svg>
      <span className="mr-[5px] w-px bg-[#a9b9bd]" />
    </div>
  );
}

export default function App() {
  return (
    <div className="relative flex h-[1080px] w-[1920px] flex-col overflow-hidden bg-[#353535] font-['Noto_Sans','Open_Sans',sans-serif] text-[14.500px] leading-[20px]">
      <div className="flex h-[29px] shrink-0 items-center bg-white text-[#161616]">
        <InkscapeLogo s={20} className="ml-[2px] mr-[5px]" />
        <Fit w={190}>*New document 1 - Inkscape</Fit>
        <span className="grow" />
        <svg width="130" height="13" viewBox="0 0 130 13" className="mr-[25px] shrink-0">
          <path d="M0 6.500h12" stroke="#000" /><path d="M58.500 3.500h8.500v8.500h-8.500zM60.500 3V.500H70v9H67.500" fill="none" stroke="#000" transform="translate(0 .3)" /><path d="M117.500.500l11.500 11.500M129 .5L117.500 12" stroke="#000" strokeWidth="1.200" />
        </svg>
      </div>
      <div className="flex h-[28px] shrink-0 bg-[#353535] text-[#dedede]">
        {menus.map(([t, w], i) => (
          <div key={t} className={"flex items-center px-[8px] " + (i === 1 ? "border-b-2 border-[#2a63ad] pt-[5px] text-[#3f7fcf]" : "pt-[3px]")}>
            <Fit w={w}>{t}</Fit>
          </div>
        ))}
      </div>
      <Toolbar />
      <div className="flex h-[856px] shrink-0">
        <ToolBox />
        <Canvas />
        <div className="flex w-[12px] shrink-0 flex-col items-center gap-[2px] bg-[#353535] pt-[422px]">
          <span className="h-[3px] w-[3px] rounded-full bg-[#e8e8e8]" /><span className="h-[3px] w-[3px] rounded-full bg-[#e8e8e8]" /><span className="h-[3px] w-[3px] rounded-full bg-[#e8e8e8]" />
        </div>
        <Dock />
        <CommandBar />
      </div>
      <div className="h-px shrink-0 bg-[#323232]" />
      <Palette />
      <StatusBar />
      <Taskbar />
      <EditMenu />
      <svg width="380" height="90" viewBox="0 0 380 90" className="absolute left-[145px] top-[706px]">
        <path d="M10 45.700L189.500 8v18.300h181v38.400h-181V83z" fill="none" stroke="#e81f26" strokeWidth="5" strokeLinejoin="round" />
      </svg>
    </div>
  );
}
